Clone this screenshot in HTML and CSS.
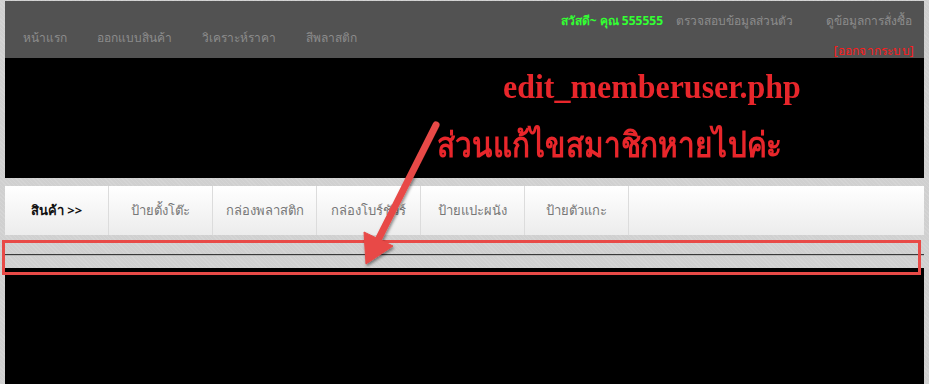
FILE: index.html
```html
<!DOCTYPE html>
<html lang="th">
<head>
  <meta charset="UTF-8" />
  <title>edit_memberuser.php</title>
  <link rel="stylesheet" href="styles.css">
</head>
<body>
  <div class="page">
    <div class="header">
      <ul class="menu">
        <li>หน้าแรก</li>
        <li>ออกแบบสินค้า</li>
        <li>วิเคราะห์ราคา</li>
        <li>สีพลาสติก</li>
      </ul>
      <div class="userbox">
        <div class="userrow">
          <span class="hello">สวัสดี~ คุณ 555555</span>
          <span class="ulink">ตรวจสอบข้อมูลส่วนตัว</span>
          <span class="ulink">ดูข้อมูลการสั่งซื้อ</span>
        </div>
        <div class="logout">[ออกจากระบบ]</div>
      </div>
    </div>

    <div class="banner">
      <div class="note-file">edit_memberuser.php</div>
      <div class="note-msg">ส่วนแก้ไขสมาชิกหายไปค่ะ</div>
    </div>

    <div class="catnav">
      <div class="cat first">สินค้า &gt;&gt;</div>
      <div class="cat">ป้ายตั้งโต๊ะ</div>
      <div class="cat">กล่องพลาสติก</div>
      <div class="cat">กล่องโบร์ชัวร์</div>
      <div class="cat">ป้ายแปะผนัง</div>
      <div class="cat">ป้ายตัวแกะ</div>
    </div>

    <div class="formarea">
      <div class="rule"></div>
    </div>
    <div class="content"></div>
  </div>

  <svg class="markup" width="929" height="384" viewBox="0 0 929 384">
    <defs>
      <filter id="shade" x="-20%" y="-20%" width="140%" height="140%">
        <feDropShadow dx="1" dy="2" stdDeviation="1.5" flood-color="#000" flood-opacity="0.45" />
      </filter>
    </defs>
    <rect x="3.5" y="241.5" width="916" height="32" fill="none" stroke="#e84a47" stroke-width="3" />
    <g filter="url(#shade)" fill="#e84a47" stroke="#e84a47">
      <line x1="436" y1="125" x2="376" y2="244" stroke-width="7" stroke-linecap="round" />
      <polygon points="364,232 393,246 366,264" stroke-width="1" stroke-linejoin="round" />
    </g>
  </svg>
</body>
</html>
```

FILE: styles.css
```css
body {
  margin: 0;
  height: 384px;
  overflow: hidden;
  position: relative;
  background-color: #d3d3d3;
  background-image: repeating-linear-gradient(45deg, rgba(255,255,255,0.04) 0 1px, rgba(0,0,0,0.015) 1px 3px);
  font-family: Tahoma, "Noto Sans", "DejaVu Sans", sans-serif;
  font-size: 13px;
}
.page {
  width: 919px;
  margin: 1px 0 0 5px;
}
.header {
  height: 57px;
  background-color: #525252;
  display: flex;
  justify-content: space-between;
  font-size: 12px;
}
.menu {
  list-style: none;
  margin: 0;
  padding: 27px 0 0 3px;
  display: flex;
}
.menu li {
  padding: 0 15px;
  color: #8c8c8c;
}
.userbox {
  display: flex;
  flex-direction: column;
  align-items: flex-end;
  padding: 10px 12px 0 0;
}
.userrow {
  display: flex;
  gap: 13px;
}
.hello {
  color: #33ff33;
  font-weight: bold;
}
.ulink {
  color: #8c8c8c;
}
.ulink + .ulink {
  margin-left: 20px;
}
.logout {
  margin: 11px -2px 0 0;
  color: #ff1a1a;
  font-size: 12px;
  letter-spacing: 0.2px;
}
.banner {
  height: 120px;
  background-color: #000;
  color: #e8262b;
  font-family: "Liberation Serif", "Noto Serif", serif;
  font-weight: bold;
}
.note-file {
  font-size: 31px;
  padding: 8px 0 0 498px;
  line-height: 36px;
  transform: scale(1.03, 1.1);
  transform-origin: 498px top;
}
.note-msg {
  font-size: 33px;
  padding: 20px 0 0 432px;
  line-height: 42px;
  transform: scale(0.9, 1.05);
  transform-origin: 432px top;
}
.catnav {
  margin-top: 8px;
  height: 49px;
  background: linear-gradient(#ffffff, #ececec);
  display: flex;
}
.cat {
  width: 103px;
  border-right: 1px solid #dcdcdc;
  display: flex;
  align-items: center;
  justify-content: center;
  color: #777;
}
.cat.first {
  color: #111;
  font-weight: bold;
}
.formarea {
  height: 33px;
  padding-top: 19px;
  box-sizing: border-box;
}
.rule {
  height: 1px;
  background-color: #3a3a3a;
  border-bottom: 1px solid #b8b8b8;
}
.content {
  height: 120px;
  background-color: #000;
}
.markup {
  position: absolute;
  top: 0;
  left: 0;
  pointer-events: none;
}
```
